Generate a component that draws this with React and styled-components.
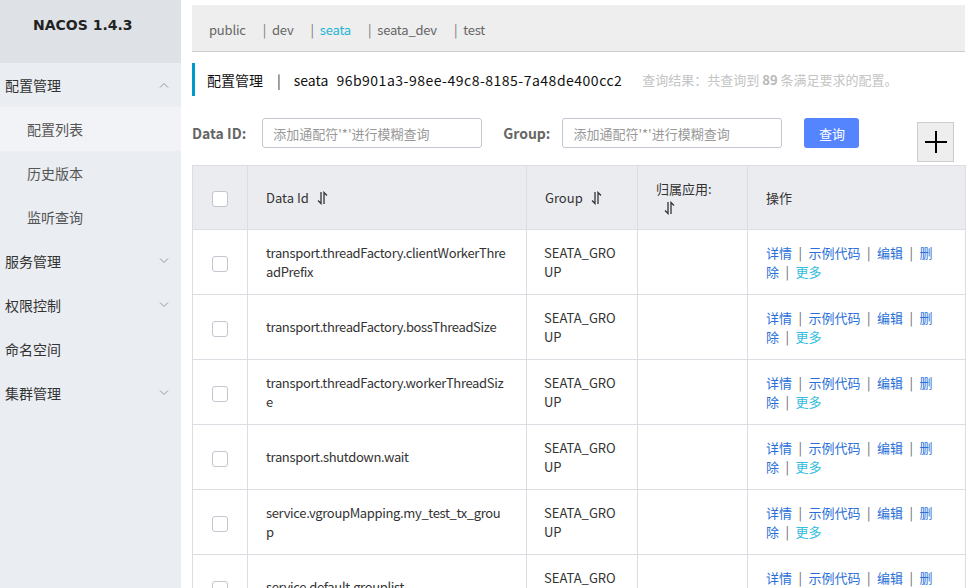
import React from "react";
import styled, { createGlobalStyle } from "styled-components";

const GlobalStyle = createGlobalStyle`
  body {
    margin: 0;
    font-family: "Noto Sans CJK SC", "Noto Sans", sans-serif;
    color: #333;
    background: #fff;
    overflow: hidden;
  }
  * { box-sizing: border-box; }
`;

const Layout = styled.div`
  display: flex;
  min-height: 100vh;
`;

const Sidebar = styled.aside`
  width: 181px;
  flex-shrink: 0;
  background: #eaedf1;
`;

const Brand = styled.div`
  height: 63px;
  background: #dee2e7;
  display: flex;
  align-items: center;
  padding-left: 33px;
  padding-bottom: 14px;
  font-family: "DejaVu Sans", "Liberation Sans", sans-serif;
  font-weight: 700;
  font-size: 14px;
  color: #222;
`;

const MenuItem = styled.div`
  height: 44px;
  display: flex;
  align-items: center;
  justify-content: space-between;
  padding-left: ${(p) => (p.sub ? "27px" : "5px")};
  padding-right: 12px;
  font-size: 14px;
  color: ${(p) => (p.sub ? "#555" : "#333")};
  background: ${(p) => (p.active ? "#f2f3f6" : "transparent")};
`;

const Chevron = ({ up }) => (
  <svg width="10" height="6" viewBox="0 0 10 6">
    <path
      d={up ? "M1 5.5 L5 1.5 L9 5.5" : "M1 0.5 L5 4.5 L9 0.5"}
      fill="none"
      stroke="#999"
      strokeWidth="1"
    />
  </svg>
);

const Main = styled.main`
  flex: 1;
  min-width: 0;
  padding: 5px 8px 0 11px;
`;

const NsBar = styled.div`
  height: 47px;
  background: #eee;
  border-bottom: 1px solid #ccc;
  display: flex;
  align-items: center;
  padding-left: 17px;
  padding-top: 3px;
  font-size: 13px;
  color: #666;
  letter-spacing: -0.2px;
`;

const NsItem = styled.span`
  margin-right: 17px;
  color: ${(p) => (p.active ? "#1fb4d6" : "#666")};
  white-space: pre;
`;

const NsSep = styled.span`
  color: #777;
  margin-right: 6px;
`;

const TitleBar = styled.div`
  margin-top: 11px;
  height: 33px;
  border-left: 3px solid #09c;
  display: flex;
  align-items: center;
  padding-left: 12px;
  font-size: 14px;
  color: #111;
`;

const TitleSep = styled.span`
  color: #333;
  margin: 0 13px 0 14px;
`;

const TitleNs = styled.span`
  margin-right: 8px;
`;

const Uuid = styled.span`
  letter-spacing: 0.5px;
`;

const ResultText = styled.span`
  margin-left: 20px;
  font-size: 13px;
  color: #c4c4c4;
  b { font-weight: 700; color: #b8b8b8; }
`;

const SearchRow = styled.div`
  margin-top: 22px;
  display: flex;
  align-items: flex-start;
  height: 44px;
`;

const Label = styled.label`
  font-size: 14px;
  font-weight: 700;
  color: #666;
  height: 30px;
  display: flex;
  align-items: center;
  margin-right: ${(p) => p.gap || "16px"};
  margin-left: ${(p) => p.offset || "0"};
`;

const Input = styled.input`
  width: 220px;
  height: 30px;
  border: 1px solid #c4c6cf;
  border-radius: 3px;
  padding: 0 10px;
  font-size: 13px;
  font-family: inherit;
  color: #333;
  &::placeholder { color: #999; }
`;

const Button = styled.button`
  margin-left: 22px;
  width: 55px;
  height: 30px;
  border: none;
  border-radius: 3px;
  background: #5584ff;
  color: #fff;
  font-size: 13px;
  font-family: inherit;
`;

const AddButton = styled.button`
  margin-left: auto;
  margin-right: 11px;
  margin-top: 4px;
  width: 37px;
  height: 40px;
  background: #eee;
  border: 1px solid #ccc;
  display: flex;
  align-items: center;
  justify-content: center;
  padding: 0;
`;

const Table = styled.table`
  margin-top: 3px;
  width: 773px;
  border-collapse: collapse;
  table-layout: fixed;
  font-size: 13px;
  color: #333;
`;

const Th = styled.th`
  height: 64px;
  background: #ebecf0;
  border: 1px solid #dcdee3;
  text-align: ${(p) => (p.center ? "center" : "left")};
  font-weight: 400;
  padding: 0 ${(p) => (p.center ? "0" : "18px")};
  line-height: 19px;
  vertical-align: middle;
`;

const Td = styled.td`
  height: 65px;
  border: 1px solid #dcdee3;
  text-align: ${(p) => (p.center ? "center" : "left")};
  padding: ${(p) => (p.center ? "0" : p.pad || "0 18px")};
  line-height: 19.5px;
  vertical-align: middle;
  word-break: break-all;
  letter-spacing: ${(p) => p.tight || "0"};
`;

const Checkbox = styled.span`
  display: inline-block;
  width: 16px;
  height: 16px;
  border: 1px solid #c4c6cf;
  border-radius: 3px;
  background: #fff;
  vertical-align: middle;
`;

const SortIcon = styled.svg`
  margin-left: 8px;
  vertical-align: -2px;
`;

const Sort = () => (
  <SortIcon width="11" height="14" viewBox="0 0 11 14">
    <path d="M4 1 V12.5 L1 9.5" fill="none" stroke="#333" strokeWidth="1.3" />
    <path d="M7 13 V1.5 L10 4.5" fill="none" stroke="#333" strokeWidth="1.3" />
  </SortIcon>
);

const Link = styled.span`
  color: ${(p) => (p.more ? "#33bde0" : "#2a6fd8")};
`;

const Pipe = styled.span`
  color: #666;
  margin: 0 6.5px;
`;

const rows = [
  "transport.threadFactory.clientWorkerThreadPrefix",
  "transport.threadFactory.bossThreadSize",
  "transport.threadFactory.workerThreadSize",
  "transport.shutdown.wait",
  "service.vgroupMapping.my_test_tx_group",
  "service.default.grouplist",
];

const menu = [
  { label: "配置管理", chevron: "up" },
  { label: "配置列表", sub: true, active: true },
  { label: "历史版本", sub: true },
  { label: "监听查询", sub: true },
  { label: "服务管理", chevron: "down" },
  { label: "权限控制", chevron: "down" },
  { label: "命名空间" },
  { label: "集群管理", chevron: "down" },
];

export default function App() {
  return (
    <Layout>
      <GlobalStyle />
      <Sidebar>
        <Brand>NACOS 1.4.3</Brand>
        {menu.map((m) => (
          <MenuItem key={m.label} sub={m.sub} active={m.active}>
            {m.label}
            {m.chevron && <Chevron up={m.chevron === "up"} />}
          </MenuItem>
        ))}
      </Sidebar>
      <Main>
        <NsBar>
          <NsItem>public</NsItem>
          <NsItem><NsSep>|</NsSep>dev</NsItem>
          <NsItem active><NsSep>|</NsSep>seata</NsItem>
          <NsItem><NsSep>|</NsSep>seata_dev</NsItem>
          <NsItem><NsSep>|</NsSep>test</NsItem>
        </NsBar>
        <TitleBar>
          配置管理<TitleSep>|</TitleSep>
          <TitleNs>seata</TitleNs>
          <Uuid>96b901a3-98ee-49c8-8185-7a48de400cc2</Uuid>
          <ResultText>
            查询结果：共查询到 <b>89</b> 条满足要求的配置。
          </ResultText>
        </TitleBar>
        <SearchRow>
          <Label>Data ID:</Label>
          <Input placeholder="添加通配符'*'进行模糊查询" />
          <Label offset="21px" gap="12px">Group:</Label>
          <Input placeholder="添加通配符'*'进行模糊查询" />
          <Button>查询</Button>
          <AddButton>
            <svg width="22" height="22" viewBox="0 0 22 22">
              <path d="M11 0 V22 M0 11 H22" stroke="#000" strokeWidth="2" />
            </svg>
          </AddButton>
        </SearchRow>
        <Table>
          <colgroup>
            <col style={{ width: 55 }} />
            <col style={{ width: 279 }} />
            <col style={{ width: 111 }} />
            <col style={{ width: 110 }} />
            <col style={{ width: 218 }} />
          </colgroup>
          <thead>
            <tr>
              <Th center><Checkbox /></Th>
              <Th>Data Id<Sort /></Th>
              <Th>Group<Sort /></Th>
              <Th>归属应用:<Sort /></Th>
              <Th>操作</Th>
            </tr>
          </thead>
          <tbody>
            {rows.map((r) => (
              <tr key={r}>
                <Td center><Checkbox /></Td>
                <Td tight="-0.35px">{r}</Td>
                <Td pad="0 17px">SEATA_GROUP</Td>
                <Td />
                <Td pad="0 22px 0 18px">
                  <Link>详情</Link><Pipe>|</Pipe>
                  <Link>示例代码</Link><Pipe>|</Pipe>
                  <Link>编辑</Link><Pipe>|</Pipe>
                  <Link>删除</Link><Pipe>|</Pipe>
                  <Link more>更多</Link>
                </Td>
              </tr>
            ))}
          </tbody>
        </Table>
      </Main>
    </Layout>
  );
}
